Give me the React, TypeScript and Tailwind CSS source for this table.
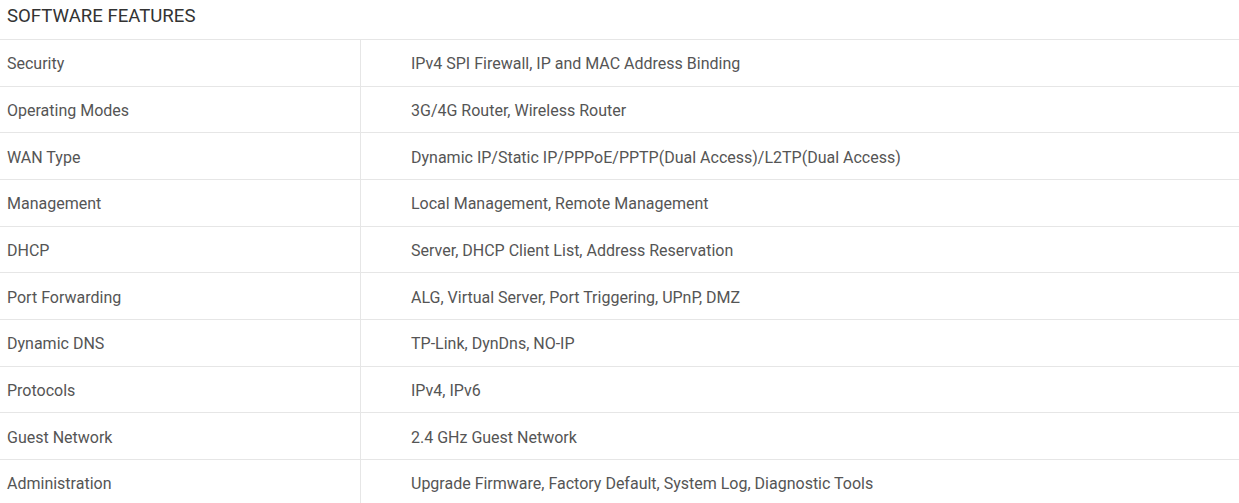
const rows: [string, string][] = [
  ["Security", "IPv4 SPI Firewall, IP and MAC Address Binding"],
  ["Operating Modes", "3G/4G Router, Wireless Router"],
  ["WAN Type", "Dynamic IP/Static IP/PPPoE/PPTP(Dual Access)/L2TP(Dual Access)"],
  ["Management", "Local Management, Remote Management"],
  ["DHCP", "Server, DHCP Client List, Address Reservation"],
  ["Port Forwarding", "ALG, Virtual Server, Port Triggering, UPnP, DMZ"],
  ["Dynamic DNS", "TP-Link, DynDns, NO-IP"],
  ["Protocols", "IPv4, IPv6"],
  ["Guest Network", "2.4 GHz Guest Network"],
  ["Administration", "Upgrade Firmware, Factory Default, System Log, Diagnostic Tools"],
];

export default function App() {
  return (
    <div className="w-[1239px] h-[503px] overflow-hidden bg-white font-['Roboto',sans-serif]">
      <h2 className="h-[39px] pl-[7px] pt-[4px] text-[18.6px] leading-[24px] text-[#333]">
        SOFTWARE FEATURES
      </h2>
      <div className="border-t border-[#e6e6e6]">
        {rows.map(([name, value]) => (
          <div key={name} className="flex h-[46.67px] border-b border-[#e6e6e6] text-[16px] text-[#555]">
            <div className="flex w-[361px] items-center border-r border-[#e6e6e6] pt-[3px] pl-[7px]">{name}</div>
            <div className="flex flex-1 items-center pt-[3px] pl-[50px]">{value}</div>
          </div>
        ))}
      </div>
    </div>
  );
}
